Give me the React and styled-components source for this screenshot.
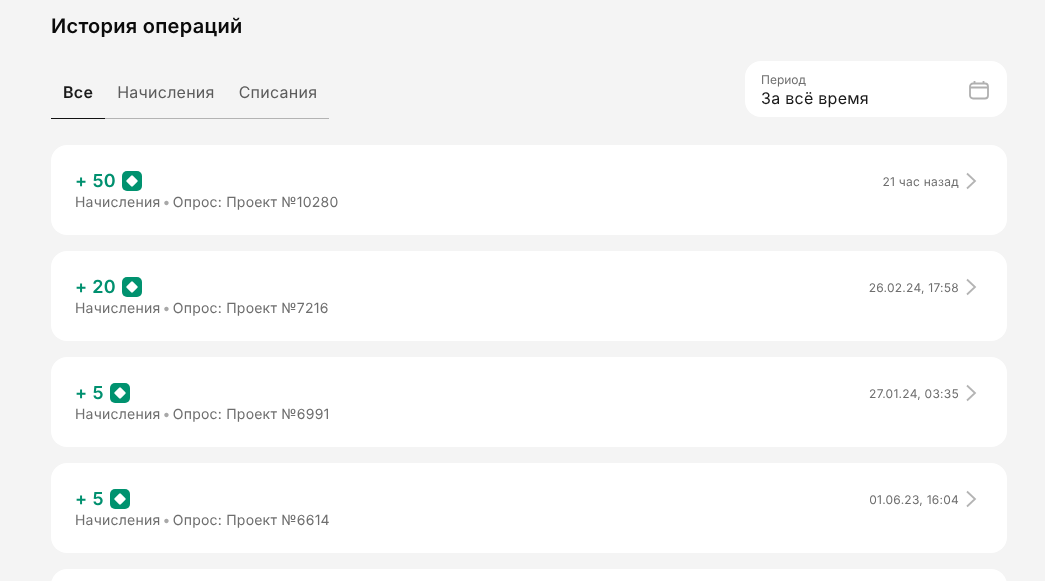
import React from "react";
import styled, { createGlobalStyle } from "styled-components";

const Global = createGlobalStyle`
  html, body { margin: 0; padding: 0; background: #f4f4f4; height: 100%; overflow: hidden; }
  body { font-family: Inter, "Noto Sans", sans-serif; text-rendering: geometricPrecision; }
`;

const Page = styled.main`
  height: 581px;
  overflow: hidden;
  padding: 14px 38px 0 51px;
  box-sizing: border-box;
  will-change: transform;
`;
const Title = styled.h1`
  margin: 0;
  font-size: 20px;
  line-height: 24px;
  font-weight: 600;
  letter-spacing: 0.27px;
  color: #0b0b0b;
`;
const Toolbar = styled.div`
  display: flex;
  justify-content: space-between;
  align-items: flex-end;
  margin-top: 23px;
`;
const Tabs = styled.div`
  display: flex;
`;
const Tab = styled.div`
  padding: 5px 12px 0;
  height: 58px;
  box-sizing: border-box;
  display: flex;
  align-items: center;
  font-size: 16px;
  letter-spacing: ${(p) => (p.$active ? "0.3px" : "0.24px")};
  font-weight: ${(p) => (p.$active ? 600 : 400)};
  color: ${(p) => (p.$active ? "#1a1a1a" : "#5c5c5c")};
  border-bottom: 1px solid ${(p) => (p.$active ? "#111" : "#b3b3b3")};
`;
const Period = styled.div`
  width: 262px;
  height: 56px;
  box-sizing: border-box;
  background: #fff;
  border-radius: 16px;
  padding: 2px 18px 0 16px;
  display: flex;
  align-items: center;
  justify-content: space-between;
  margin-bottom: 2px;
`;
const PeriodText = styled.div`
  display: flex;
  flex-direction: column;
`;
const PeriodLabel = styled.span`
  font-size: 12px;
  line-height: 16px;
  color: #6f6f6f;
`;
const PeriodValue = styled.span`
  font-size: 16px;
  line-height: 20px;
  letter-spacing: 0.27px;
  color: #1a1a1a;
`;
const List = styled.div`
  display: flex;
  flex-direction: column;
  gap: 16px;
  margin-top: 26px;
`;
const Card = styled.div`
  height: 90px;
  flex: none;
  box-sizing: border-box;
  background: #fff;
  border-radius: 16px;
  padding: 0 30px 0 24px;
  display: flex;
  align-items: center;
  justify-content: space-between;
`;
const Info = styled.div`
  display: flex;
  flex-direction: column;
  padding-top: 2px;
`;
const Amount = styled.div`
  display: flex;
  align-items: center;
  gap: 6px;
  font-size: 18px;
  line-height: 24px;
  font-weight: 600;
  letter-spacing: 0.3px;
  color: #00906f;
`;
const CoinIcon = styled.svg`
  margin-top: -2px;
`;
const Desc = styled.div`
  font-size: 14px;
  line-height: 18px;
  letter-spacing: 0.22px;
  color: #6e6e6e;
`;
const Dot = styled.span`
  color: #a8a8a8;
  margin: 0 -2px;
`;
const Meta = styled.div`
  display: flex;
  align-items: center;
  gap: 6px;
  margin-top: -18px;
  font-size: 12px;
  letter-spacing: 0.25px;
  color: #6e6e6e;
`;

const Coin = () => (
  <CoinIcon width="20" height="20" viewBox="0 0 20 20">
    <rect width="20" height="20" rx="5" fill="#00926f" />
    <rect x="5.6" y="5.6" width="8.8" height="8.8" rx="1.2" fill="#fff" transform="rotate(45 10 10)" />
  </CoinIcon>
);
const Calendar = () => (
  <svg width="20" height="20" viewBox="0 0 20 20" fill="none" stroke="#b0b0b0" strokeWidth="1.8">
    <rect x="1" y="3.5" width="18" height="15" rx="3" />
    <path d="M1 7.5H19M5.5 1V4M14.5 1V4" />
  </svg>
);
const Chevron = () => (
  <svg width="12" height="18" viewBox="0 0 12 18" fill="none" stroke="#b4b4b4" strokeWidth="1.8">
    <path d="M2 1.5 L10 9 L2 16.5" />
  </svg>
);

const rows = [
  { amount: 50, project: "10280", date: "21 час назад" },
  { amount: 20, project: "7216", date: "26.02.24, 17:58" },
  { amount: 5, project: "6991", date: "27.01.24, 03:35" },
  { amount: 5, project: "6614", date: "01.06.23, 16:04" },
];

export default function App() {
  return (
    <Page>
      <Global />
      <Title>История операций</Title>
      <Toolbar>
        <Tabs>
          <Tab $active>Все</Tab>
          <Tab>Начисления</Tab>
          <Tab>Списания</Tab>
        </Tabs>
        <Period>
          <PeriodText>
            <PeriodLabel>Период</PeriodLabel>
            <PeriodValue>За всё время</PeriodValue>
          </PeriodText>
          <Calendar />
        </Period>
      </Toolbar>
      <List>
        {rows.map((r) => (
          <Card key={r.project}>
            <Info>
              <Amount>
                + {r.amount} <Coin />
              </Amount>
              <Desc>
                Начисления <Dot>•</Dot> Опрос: Проект №{r.project}
              </Desc>
            </Info>
            <Meta>
              {r.date}
              <Chevron />
            </Meta>
          </Card>
        ))}
        <Card />
      </List>
    </Page>
  );
}
